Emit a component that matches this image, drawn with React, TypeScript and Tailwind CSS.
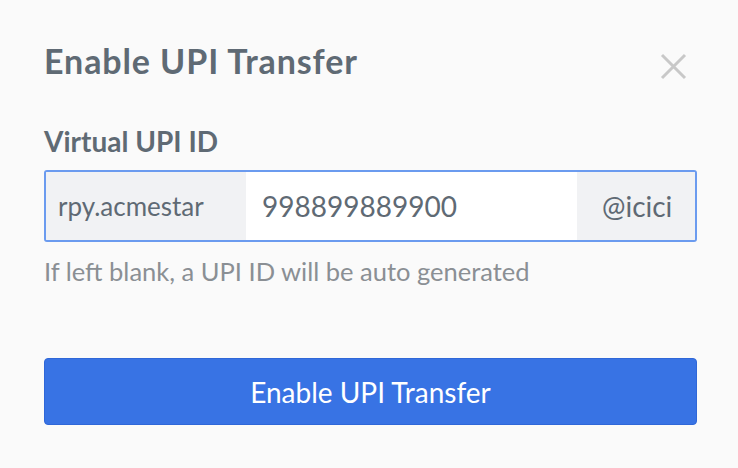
export default function App() {
  return (
    <div className="min-h-[468px] w-[738px] bg-[#fafafa] font-['Lato',sans-serif] text-[#5f6a74]">
      <div className="pl-[44px] pr-[41px] pt-[41px]">
        <div className="flex items-start justify-between">
          <h2 className="text-[34px] font-bold leading-[40px] tracking-[0.9px]">Enable UPI Transfer</h2>
          <button className="mr-[10px] mt-[12px] text-[#c8c8c8]">
            <svg width="27" height="27" viewBox="0 0 27 27" fill="none" stroke="currentColor" strokeWidth="3">
              <path d="M2 2L25 25M25 2L2 25" />
            </svg>
          </button>
        </div>
        <div className="mt-[43px] text-[28px] font-bold leading-[34px]">Virtual UPI ID</div>
        <div className="mt-[12px] flex h-[72px] overflow-hidden rounded-[3px] border-2 border-[#6b9bef] text-[28px]">
          <div className="flex w-[200px] items-center bg-[#f1f2f4] pl-[12px] text-[26px]">rpy.acmestar</div>
          <div className="flex flex-1 items-center bg-white pl-[16px]">998899889900</div>
          <div className="flex w-[118px] items-center bg-[#f1f2f4] pl-[25px]">@icici</div>
        </div>
        <p className="mt-[14px] text-[25.5px] leading-[30px] text-[#8a8f94]">If left blank, a UPI ID will be auto generated</p>
        <button className="mt-[72px] flex h-[67px] w-full items-center justify-center rounded-[4px] border border-[#2f67d8] bg-[#3873e4] text-[28px] text-white">
          Enable UPI Transfer
        </button>
      </div>
    </div>
  );
}
